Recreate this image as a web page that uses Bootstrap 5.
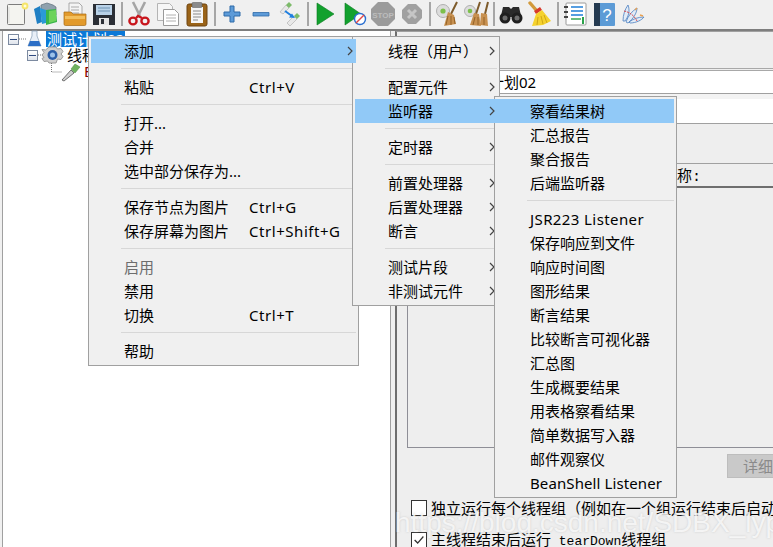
<!DOCTYPE html>
<html lang="zh">
<head>
<meta charset="utf-8">
<title>JMeter</title>
<link href="https://cdn.jsdelivr.net/npm/bootstrap@5.3.0/dist/css/bootstrap.min.css" rel="stylesheet">
<style>
html,body{height:100%;margin:0;overflow:hidden}
body{background:#f0f0f0;font-family:"Noto Sans","Noto Sans CJK SC",sans-serif;font-size:15px;color:#000;line-height:24px}
.jm-app{position:relative;width:773px;height:547px;overflow:hidden}
.jm-bar{height:31px;padding:0 0 2px 2.5px;background:#f0f0f0;border-bottom:2px solid #7e7e7e}
.jm-tool{width:29px;height:29px}
.jm-tool svg{width:26px;height:26px;display:block}
.jm-sep{width:6px;height:24px}
.jm-sep::before{content:"";display:block;width:2px;height:24px;margin:0 2px;background:#a6a6a6}
.jm-main{height:516px}
.jm-tree{width:389px;margin-left:2px;background:#fff;border:solid #a0a0a0;border-width:0 1px 0 1px;position:relative}
.jm-gut{width:4px}
.jm-right{flex:1;min-width:0;position:relative;background:#eee;border-left:2px solid #6e6e6e;border-top:1px solid #a0a0a0}
.jm-row{white-space:nowrap;line-height:16px;height:16px}
.jm-row svg{flex:none;overflow:visible}
.jm-sel{background:#0a78d7;color:#fff;padding:0 1px;display:inline-block;width:79px;height:16px;overflow:hidden}
.jm-tog{width:11px;height:11px;border:1px solid #7c8aa0;background:linear-gradient(#fff,#dfe4ec);position:relative;flex:none}
.jm-tog::before{content:"";position:absolute;left:1px;right:1px;top:4px;height:1px;background:#2f4a80}
.jm-top{height:37px;border-bottom:1px solid #a8a8a8;margin-bottom:1px}
.jm-field{background:#fff;height:24px;border-top:1px solid #a8a8a8;border-bottom:1px solid #a0a0a0;line-height:22px;padding-left:62px;white-space:nowrap}
.jm-field2{background:#fff;height:25px;border-bottom:1px solid #a0a0a0}
.jm-strip{height:5px;background:#f3f3f3}
.jm-name{line-height:22px;height:22px;white-space:nowrap;border-top:1px solid #a0a0a0;border-bottom:2px solid #6e6e6e;box-sizing:content-box;padding-left:280px}
.jm-colon{font-family:"Liberation Mono",monospace}
.jm-box{margin-left:10px;height:260px;border-left:1px solid #8e8e96;border-bottom:1px solid #8e8e96}
.jm-det{width:46px;height:24px;background:#c9c9c9;border:1px solid #bdbdbd;border-right:0;color:#8a8a8a;padding-left:15px;line-height:22px;white-space:nowrap;overflow:hidden}
.jm-chk{white-space:nowrap;height:16px;line-height:16px;margin-left:14px}
.jm-chk .form-check-input{width:16px;height:16px;margin:0;border:1px solid #333;border-radius:0;background-color:#fff;flex:none}
.jm-chk .form-check-input:checked{background-color:#fff;border-color:#333;--bs-form-check-bg-image:url("data:image/svg+xml,%3csvg xmlns='http://www.w3.org/2000/svg' viewBox='0 0 16 16'%3e%3cpath fill='none' stroke='%23333' stroke-width='1.5' d='M3 8l3.5 3.5L13 4'/%3e%3c/svg%3e")}
.jm-mono{font-family:"Liberation Mono",monospace;font-size:13px;white-space:pre}
.jm-menu.dropdown-menu{position:absolute;z-index:auto;min-width:0;margin:0;padding:2px;font-size:15px;background:#f0f0f0;border:1px solid #a0a0a0;border-radius:0;color:#000}
.jm-m1{left:88px;top:36px;width:271px}
.jm-m2{left:352px;top:36px;width:148px}
.jm-m3{left:494px;top:96px;width:183px}
.jm-menu .dropdown-item{height:24px;line-height:24px;padding:0 0 0 33px;color:#000;white-space:nowrap;display:flex;align-items:center;position:relative;background:transparent}
.jm-menu .dropdown-item.active{background:#91c9f7;color:#000;z-index:3}
.jm-menu .dropdown-item.disabled{color:#6d6d6d;background:transparent}
.jm-menu .dropdown-divider{margin:5px 0 6px 30px;border-top:1px solid #d7d7d7;opacity:1;height:0}
.jm-lab{width:125px;flex:none}
.jm-key{letter-spacing:.55px}
.jm-jsr{letter-spacing:.4px}
.jm-bean{letter-spacing:.1px}
.jm-arr{position:absolute;right:3px;top:7px;width:6px;height:10px}
.jm-m2 .jm-arr{right:2px}
.jm-mark{position:absolute;left:395px;top:503px;font:28px/40px "Liberation Sans",sans-serif;color:rgba(255,255,255,.75);white-space:nowrap;z-index:5;text-shadow:0 0 2px rgba(170,170,170,.5)}
</style>
</head>
<body>
<div class="jm-app">
<div class="jm-bar d-flex align-items-center">
 <div class="jm-tool d-flex align-items-center justify-content-center"><svg viewBox="0 0 26 26"><rect x="3.5" y="3.5" width="17" height="20" rx="1" fill="#f4f4f0" stroke="#7d7d7d"/><path d="M5 6v16" stroke="#ddd"/><circle cx="21" cy="5" r="3.4" fill="#f6e56a"/><circle cx="21" cy="5" r="1.5" fill="#fffbd8"/></svg></div>
 <div class="jm-tool d-flex align-items-center justify-content-center"><svg viewBox="0 0 26 26"><path d="M8 4l6-2 6 2 3 2v8l-15 0z" fill="#8fa1ad" stroke="#5f6f7a" stroke-width=".7"/><path d="M1 8l6-3 2 16-5 2z" fill="#1f7fc4"/><path d="M7 7l6 2 0 13-4 1z" fill="#2a9ad6"/><path d="M13 9l10-1 1 13-11 3z" fill="#39b54a"/><path d="M16 10l7-1 0 11-7 2z" fill="#6cd35a"/></svg></div>
 <div class="jm-tool d-flex align-items-center justify-content-center"><svg viewBox="0 0 26 26"><path d="M7 2h10l3 3v10H7z" fill="#f4f4f4" stroke="#8a8a8a" stroke-width=".7"/><path d="M9 6h8M9 9h8M9 12h8" stroke="#aaa"/><path d="M2 11h7l2 2h13v10a1.5 1.5 0 0 1-1.500 1.500h-19A1.500 1.500 0 0 1 2 23z" fill="#e29a2c" stroke="#a86a16" stroke-width=".7"/><path d="M3 15h20v3H3z" fill="#f3bf5c"/></svg></div>
 <div class="jm-tool d-flex align-items-center justify-content-center"><svg viewBox="0 0 26 26"><path d="M2 3h22v21H2z" fill="#2b2f36"/><rect x="5" y="4" width="16" height="10" fill="#b9d2e8"/><path d="M7 7h12M7 10h12" stroke="#6f93b3"/><rect x="8" y="17" width="10" height="7" fill="#e5e5e5"/><rect x="10" y="18" width="3" height="5" fill="#2b2f36"/></svg></div>
 <div class="jm-sep"></div>
 <div class="jm-tool d-flex align-items-center justify-content-center"><svg viewBox="0 0 26 26"><path d="M7 1l7 14M19 1l-7 14" stroke="#a5a5a5" stroke-width="2.600"/><g fill="none" stroke="#c8161d" stroke-width="2.400"><ellipse cx="7" cy="20" rx="3.600" ry="3.400"/><ellipse cx="19" cy="20" rx="3.600" ry="3.400"/><path d="M10 17l2-2 4 2"/></g></svg></div>
 <div class="jm-tool d-flex align-items-center justify-content-center"><svg viewBox="0 0 26 26"><path d="M2.500 2.500h12l3 3v14h-15z" fill="#f6f6f6" stroke="#b4b4b4"/><path d="M8.500 8.500h11l4 4v12h-15z" fill="#fff" stroke="#9a9a9a"/><path d="M11 14h10M11 17h10M11 20h10" stroke="#b0b0b0"/></svg></div>
 <div class="jm-tool d-flex align-items-center justify-content-center"><svg viewBox="0 0 26 26"><rect x="3" y="3" width="20" height="22" rx="2" fill="#9a6318" stroke="#6e4410"/><path d="M7 6h12v16H7z" fill="#f6f6f6"/><rect x="8" y="1.500" width="10" height="5" rx="1" fill="#8b8b8b" stroke="#555" stroke-width=".5"/><path d="M9 10h8M9 13h8M9 16h8M9 19h5" stroke="#8a8a8a"/></svg></div>
 <div class="jm-sep"></div>
 <div class="jm-tool d-flex align-items-center justify-content-center"><svg viewBox="0 0 26 26"><path d="M11 5h4v6h6v4h-6v6h-4v-6H5v-4h6z" fill="#5d9bd8" stroke="#2f6ba8"/></svg></div>
 <div class="jm-tool d-flex align-items-center justify-content-center"><svg viewBox="0 0 26 26"><path d="M5 11.500h16v3.500H5z" fill="#5d9bd8" stroke="#2f6ba8" stroke-width=".8"/></svg></div>
 <div class="jm-tool d-flex align-items-center justify-content-center"><svg viewBox="0 0 26 26"><path d="M3 11L9 4l3 3-6 6z" fill="#e8e8e8" stroke="#aaa" stroke-width=".6"/><path d="M9 4l3-3 3 3-3 3z" fill="#7dbb6a"/><path d="M10 22l7-7 3 3-7 7z" fill="#e8e8e8" stroke="#aaa" stroke-width=".6"/><path d="M17 15l3-3 3 3-3 3z" fill="#7dbb6a"/><path d="M8 10l7 5" stroke="#1f7fe0" stroke-width="2"/><path d="M18 17l-6-.5 3-4z" fill="#1f7fe0"/></svg></div>
 <div class="jm-sep"></div>
 <div class="jm-tool d-flex align-items-center justify-content-center"><svg viewBox="0 0 26 26"><path d="M5 2l17 11L5 24z" fill="#12a12e" stroke="#0c7a20" stroke-width=".6"/></svg></div>
 <div class="jm-tool d-flex align-items-center justify-content-center"><svg viewBox="0 0 26 26"><path d="M4 2l16 11L4 24z" fill="#12a12e" stroke="#0c7a20" stroke-width=".6"/><circle cx="19" cy="18" r="5.500" fill="#fff" stroke="#2a6fd0" stroke-width="1.400"/><path d="M15 22l8-8" stroke="#e04848" stroke-width="1.500"/></svg></div>
 <div class="jm-tool d-flex align-items-center justify-content-center"><svg viewBox="0 0 26 26"><path d="M8 1h10l7 7v10l-7 7H8l-7-7V8z" fill="#9b9b9b"/><text x="13" y="16.500" text-anchor="middle" font-family="Liberation Sans" font-size="8" font-weight="700" fill="#bdbdbd">STOP</text></svg></div>
 <div class="jm-tool d-flex align-items-center justify-content-center"><svg viewBox="0 0 26 26"><path d="M9 3h8l6 6v8l-6 6H9l-6-6V9z" fill="#a0a0a0"/><path d="M9 9l8 8M17 9l-8 8" stroke="#c6c6c6" stroke-width="3"/></svg></div>
 <div class="jm-sep"></div>
 <div class="jm-tool d-flex align-items-center justify-content-center"><svg viewBox="0 0 26 26"><circle cx="9" cy="10" r="6.500" fill="#dcdcdc" stroke="#b0b0b0"/><circle cx="9" cy="10" r="2.600" fill="#7cc04b"/><path d="M23 1l-6 12" stroke="#7d5a2a" stroke-width="2"/><path d="M14 11l6 3 2 9-12 2z" fill="#c79050"/><path d="M14 15l-2 9M17 15l0 9M20 16l1 7" stroke="#946226"/></svg></div>
 <div class="jm-tool d-flex align-items-center justify-content-center"><svg viewBox="0 0 26 26"><circle cx="7" cy="10" r="5.500" fill="#dcdcdc" stroke="#b0b0b0"/><circle cx="7" cy="10" r="2.300" fill="#7cc04b"/><path d="M17 1l-4 12M25 1l-3 12" stroke="#7d5a2a" stroke-width="2"/><path d="M11 12l5 1 2 12-11-1z" fill="#c79050"/><path d="M18 12l6 1 1 12-8-1z" fill="#c79050"/><path d="M12 16l-2 8M15 16v8M21 16v8" stroke="#946226"/></svg></div>
 <div class="jm-sep"></div>
 <div class="jm-tool d-flex align-items-center justify-content-center"><svg viewBox="0 0 26 26"><path d="M5 6h6l2 2h0l2-2h6l3 13h-7l-1-3h-6l-1 3H2z" fill="#2a2a2a"/><circle cx="7" cy="17" r="5.500" fill="#1f1f1f"/><circle cx="19" cy="17" r="5.500" fill="#1f1f1f"/><circle cx="7" cy="17" r="2.500" fill="#6d6d6d"/><circle cx="19" cy="17" r="2.500" fill="#6d6d6d"/></svg></div>
 <div class="jm-tool d-flex align-items-center justify-content-center"><svg viewBox="0 0 26 26"><path d="M3 2l7 8" stroke="#d29a3c" stroke-width="3.400" stroke-linecap="round"/><path d="M7 10l6-4 2 3-6 4z" fill="#d8392b"/><path d="M9 13l6-4 9 11-8 4-11 1z" fill="#f5d22e"/><path d="M11 16l-1 8M14 15l2 8M17 14l3 8" stroke="#d0a616"/></svg></div>
 <div class="jm-sep"></div>
 <div class="jm-tool d-flex align-items-center justify-content-center"><svg viewBox="0 0 26 26"><rect x="4" y="2" width="20" height="22" rx="1" fill="#fff" stroke="#9a9a9a"/><path d="M9 6h12M9 10h12M9 14h12" stroke="#1f7fd8" stroke-width="1.400"/><path d="M9 18h10" stroke="#2aa24a" stroke-width="1.400"/><path d="M2 6h4M2 11h4M2 16h4" stroke="#444" stroke-width="2"/><path d="M21 16v7" stroke="#2aa24a" stroke-width="2"/></svg></div>
 <div class="jm-tool d-flex align-items-center justify-content-center"><svg viewBox="0 0 26 26"><rect x="3" y="2" width="21" height="23" rx="1" fill="#5c9bd6"/><rect x="3" y="2" width="6" height="23" fill="#243a50"/><text x="16" y="20" text-anchor="middle" font-family="Liberation Sans" font-size="17" fill="#fff">?</text></svg></div>
 <div class="jm-tool d-flex align-items-center justify-content-center"><svg viewBox="0 0 26 26"><path d="M3 20C3 14 5 8 8 4c2 5 1 11-3 16zM6 21c2-6 6-11 11-14 0 5-4 11-9 15zM9 21c4-3 9-5 15-5-2 3-8 6-14 6z" fill="#e2ebf6" stroke="#4a7fc0" stroke-width=".8"/><path d="M4 10c5 1 10 4 13 10" fill="none" stroke="#d8484c" stroke-width="1" stroke-dasharray="2 1"/><path d="M15 9l2-2M20 14l3 1" stroke="#e8a050" stroke-width="1.400"/></svg></div>
</div>
<div class="jm-main d-flex">
 <div class="jm-tree">
  <div class="d-flex align-items-center jm-row" style="padding-left:5px">
   <span class="jm-tog"></span>
   <svg width="27" height="16" viewBox="0 0 27 16"><path d="M0 8h8" stroke="#777" stroke-dasharray="1 1"/><path d="M13 0h5v5l4 10H9l4-10z" fill="#e8eff7" stroke="#8ea4bb" stroke-width=".8"/><path d="M11 10h9l2 5H9z" fill="#2c6fc6"/></svg>
   <span class="jm-sel">测试计划02</span>
  </div>
  <div class="d-flex align-items-center jm-row" style="padding-left:24px">
   <span class="jm-tog"></span>
   <svg width="29" height="18" viewBox="0 0 29 18"><path d="M0 9h6" stroke="#777" stroke-dasharray="1 1"/><path d="M11 1h7l1.500 2 3.500-.5 2 3-2 2.500 2 2.500-2 3-3.500-.5L18 17h-7l-1.500-2-3.500.5-2-3L6 11.500 4 9l2-2.500-2-3 3.500.5z" fill="#d0d0d0" stroke="#9b9b9b"/><circle cx="14.500" cy="9" r="5" fill="#2b5ea8"/><circle cx="14.500" cy="9" r="2.500" fill="#9cc2ea"/></svg>
   <span>线程组</span>
  </div>
  <div class="d-flex jm-row" style="padding-left:48px">
   <svg width="33" height="18" viewBox="0 0 33 18"><path d="M.5 0v9h10" fill="none" stroke="#777" stroke-dasharray="1 1"/><path d="M11 17l9-10 3 3-10 8z" fill="#cfcfcf" stroke="#555" stroke-width=".8"/><path d="M20 6l4-5 5 3-5 6z" fill="#6fb35f" stroke="#4a8a3c" stroke-width=".5"/></svg>
   <span style="color:#8b0000">BeanShell</span>
  </div>
 </div>
 <div class="jm-gut"></div>
 <div class="jm-right">
  <div class="jm-top"></div>
  <div class="jm-field">测试计划02</div>
  <div class="jm-strip"></div>
  <div class="jm-field2"></div>
  <div style="height:39px"></div>
  <div class="jm-name">称<span class="jm-colon">:</span></div>
  <div class="jm-box"></div>
  <div class="d-flex justify-content-end" style="margin-top:6px"><div class="jm-det">详细</div></div>
  <div class="jm-chk d-flex align-items-center gap-1" style="margin-top:22px"><input class="form-check-input" type="checkbox" aria-label="独立运行"><span>独立运行每个线程组（例如在一个组运行结束后启动下一个）</span></div>
  <div class="jm-chk d-flex align-items-center gap-1" style="margin-top:16px"><input class="form-check-input" type="checkbox" checked aria-label="主线程"><span>主线程结束后运行<span class="jm-mono"> tearDown</span>线程组</span></div>
 </div>
</div>

<div class="jm-menu jm-m1 dropdown-menu show">
 <div class="dropdown-item active">添加<svg class="jm-arr" viewBox="0 0 6 10"><path d="M1 1l4 4-4 4" fill="none" stroke="#444" stroke-width="1.200"/></svg></div>
 <div class="dropdown-divider"></div>
 <div class="dropdown-item"><span class="jm-lab">粘贴</span><span class="jm-key">Ctrl+V</span></div>
 <div class="dropdown-divider"></div>
 <div class="dropdown-item">打开...</div>
 <div class="dropdown-item">合并</div>
 <div class="dropdown-item">选中部分保存为...</div>
 <div class="dropdown-divider"></div>
 <div class="dropdown-item"><span class="jm-lab">保存节点为图片</span><span class="jm-key">Ctrl+G</span></div>
 <div class="dropdown-item"><span class="jm-lab">保存屏幕为图片</span><span class="jm-key">Ctrl+Shift+G</span></div>
 <div class="dropdown-divider"></div>
 <div class="dropdown-item disabled">启用</div>
 <div class="dropdown-item">禁用</div>
 <div class="dropdown-item"><span class="jm-lab">切换</span><span class="jm-key">Ctrl+T</span></div>
 <div class="dropdown-divider"></div>
 <div class="dropdown-item">帮助</div>
</div>

<div class="jm-menu jm-m2 dropdown-menu show">
 <div class="dropdown-item">线程（用户）<svg class="jm-arr" viewBox="0 0 6 10"><path d="M1 1l4 4-4 4" fill="none" stroke="#444" stroke-width="1.200"/></svg></div>
 <div class="dropdown-divider"></div>
 <div class="dropdown-item">配置元件<svg class="jm-arr" viewBox="0 0 6 10"><path d="M1 1l4 4-4 4" fill="none" stroke="#444" stroke-width="1.200"/></svg></div>
 <div class="dropdown-item active">监听器<svg class="jm-arr" viewBox="0 0 6 10"><path d="M1 1l4 4-4 4" fill="none" stroke="#444" stroke-width="1.200"/></svg></div>
 <div class="dropdown-divider"></div>
 <div class="dropdown-item">定时器<svg class="jm-arr" viewBox="0 0 6 10"><path d="M1 1l4 4-4 4" fill="none" stroke="#444" stroke-width="1.200"/></svg></div>
 <div class="dropdown-divider"></div>
 <div class="dropdown-item">前置处理器<svg class="jm-arr" viewBox="0 0 6 10"><path d="M1 1l4 4-4 4" fill="none" stroke="#444" stroke-width="1.200"/></svg></div>
 <div class="dropdown-item">后置处理器<svg class="jm-arr" viewBox="0 0 6 10"><path d="M1 1l4 4-4 4" fill="none" stroke="#444" stroke-width="1.200"/></svg></div>
 <div class="dropdown-item">断言<svg class="jm-arr" viewBox="0 0 6 10"><path d="M1 1l4 4-4 4" fill="none" stroke="#444" stroke-width="1.200"/></svg></div>
 <div class="dropdown-divider"></div>
 <div class="dropdown-item">测试片段<svg class="jm-arr" viewBox="0 0 6 10"><path d="M1 1l4 4-4 4" fill="none" stroke="#444" stroke-width="1.200"/></svg></div>
 <div class="dropdown-item">非测试元件<svg class="jm-arr" viewBox="0 0 6 10"><path d="M1 1l4 4-4 4" fill="none" stroke="#444" stroke-width="1.200"/></svg></div>
</div>

<div class="jm-menu jm-m3 dropdown-menu show">
 <div class="dropdown-item active">察看结果树</div>
 <div class="dropdown-item">汇总报告</div>
 <div class="dropdown-item">聚合报告</div>
 <div class="dropdown-item">后端监听器</div>
 <div class="dropdown-divider"></div>
 <div class="dropdown-item"><span class="jm-jsr">JSR223 Listener</span></div>
 <div class="dropdown-item">保存响应到文件</div>
 <div class="dropdown-item">响应时间图</div>
 <div class="dropdown-item">图形结果</div>
 <div class="dropdown-item">断言结果</div>
 <div class="dropdown-item">比较断言可视化器</div>
 <div class="dropdown-item">汇总图</div>
 <div class="dropdown-item">生成概要结果</div>
 <div class="dropdown-item">用表格察看结果</div>
 <div class="dropdown-item">简单数据写入器</div>
 <div class="dropdown-item">邮件观察仪</div>
 <div class="dropdown-item"><span class="jm-bean">BeanShell Listener</span></div>
</div>
<div class="jm-mark">https://blog.csdn.net/SDBX_lyp</div>
</div>
<script src="https://cdn.jsdelivr.net/npm/bootstrap@5.3.0/dist/js/bootstrap.bundle.min.js"></script>
</body>
</html>
